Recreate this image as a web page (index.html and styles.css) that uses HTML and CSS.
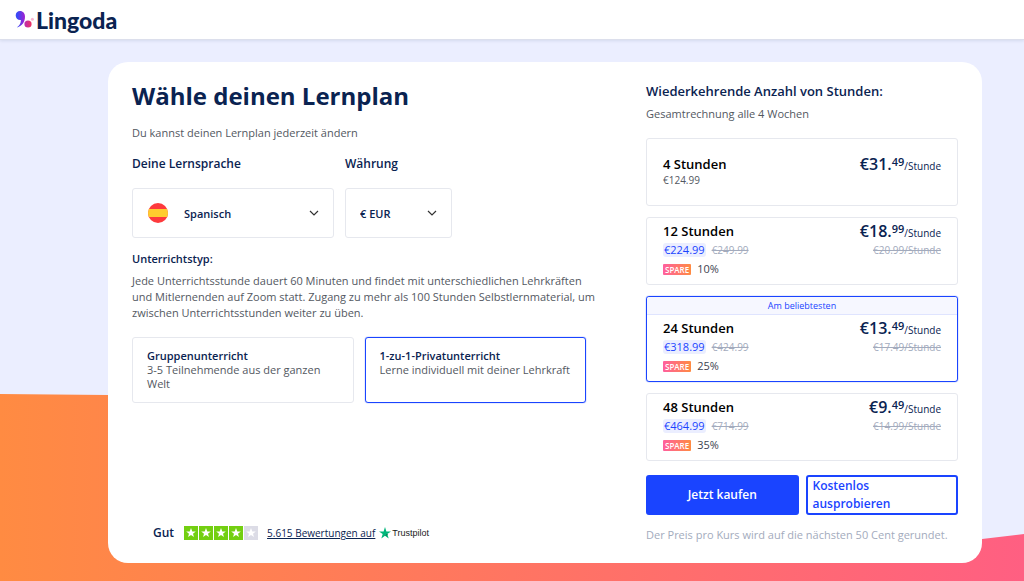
FILE: index.html
```html
<!DOCTYPE html>
<html lang="de">
<head>
    <meta charset="UTF-8">
    <meta name="viewport" content="width=device-width, initial-scale=1.0">
    <title>Lingoda - Lernplan</title>
    <link rel="stylesheet" href="styles.css">
</head>
<body>
    <header class="header">
        <a class="logo" href="#">
            <svg class="logo-mark" viewBox="0 0 19 18" aria-hidden="true">
                <defs>
                    <linearGradient id="comma" x1="0" y1="0" x2="1" y2="0">
                        <stop offset="0.2" stop-color="#3a49f5"/>
                        <stop offset="1" stop-color="#a51fd0"/>
                    </linearGradient>
                    <linearGradient id="dot" x1="0" y1="0" x2="1" y2="0">
                        <stop offset="0" stop-color="#b92bb0"/>
                        <stop offset="1" stop-color="#f03460"/>
                    </linearGradient>
                </defs>
                <path fill="url(#comma)" d="M5 0C8 0 10 2.300 10 5.700C10 11 6.800 15.300 1.700 16.500C4.500 14.500 6 12 5.900 8.900C3 9.300 0.700 7.400 0.700 4.400C0.700 1.800 2.600 0 5 0Z"/>
                <circle cx="13" cy="13" r="3.600" fill="url(#dot)"/>
                <circle cx="17.400" cy="8.300" r="1.500" fill="#f9b4cf"/>
            </svg>
            <span class="logo-text">Lingoda</span>
        </a>
    </header>

    <svg class="wave" viewBox="0 0 1024 187" preserveAspectRatio="none" aria-hidden="true">
        <defs>
            <linearGradient id="sunset" x1="0" y1="0" x2="1" y2="0">
                <stop offset="0" stop-color="#ff8b42"/>
                <stop offset="1" stop-color="#ff5f82"/>
            </linearGradient>
        </defs>
        <path fill="url(#sunset)" d="M0 0L108 1C420 20 640 190 982 145L1024 140V187H0Z"/>
    </svg>

    <main class="card">
        <section class="settings">
            <h1 class="title">Wähle deinen Lernplan</h1>
            <p class="text">Du kannst deinen Lernplan jederzeit ändern</p>

            <div class="selects">
                <div class="field">
                    <label class="label" for="language">Deine Lernsprache</label>
                    <div class="select-wrap">
                        <svg class="flag" viewBox="0 0 20 20" aria-hidden="true">
                            <clipPath id="round"><circle cx="10" cy="10" r="10"/></clipPath>
                            <g clip-path="url(#round)">
                                <path fill="#fd3a3d" d="M0 0H20V20H0Z"/>
                                <path fill="#ffcd2e" d="M0 6H20V14H0Z"/>
                            </g>
                        </svg>
                        <select class="select with-flag" id="language">
                            <option>Spanisch</option>
                        </select>
                        <svg class="chevron" viewBox="0 0 10 6" aria-hidden="true"><path d="M1 1L5 5L9 1"/></svg>
                    </div>
                </div>
                <div class="field">
                    <label class="label" for="currency">Währung</label>
                    <div class="select-wrap">
                        <select class="select" id="currency">
                            <option>€ EUR</option>
                        </select>
                        <svg class="chevron" viewBox="0 0 10 6" aria-hidden="true"><path d="M1 1L5 5L9 1"/></svg>
                    </div>
                </div>
            </div>

            <h2 class="type-title">Unterrichtstyp:</h2>
            <p class="text type-text">Jede Unterrichtsstunde dauert 60 Minuten und findet mit unterschiedlichen Lehrkräften und Mitlernenden auf Zoom statt. Zugang zu mehr als 100 Stunden Selbstlernmaterial, um zwischen Unterrichtsstunden weiter zu üben.</p>

            <div class="types">
                <label class="type">
                    <input class="radio" type="radio" name="type">
                    <strong class="type-name">Gruppenunterricht</strong>
                    <span>3-5 Teilnehmende aus der ganzen Welt</span>
                </label>
                <label class="type">
                    <input class="radio" type="radio" name="type" checked>
                    <strong class="type-name">1-zu-1-Privatunterricht</strong>
                    <span>Lerne individuell mit deiner Lehrkraft</span>
                </label>
            </div>

            <div class="rating">
                <span class="rating-word">Gut</span>
                <svg class="stars" viewBox="0 0 75 14" role="img" aria-label="4 von 5 Sternen">
                    <defs>
                        <path id="star" d="M0 -5L1.300 -1.600L4.800 -1.500L2 0.700L3 4.100L0 2.100L-3 4.100L-2 0.700L-4.800 -1.500L-1.300 -1.600Z"/>
                    </defs>
                    <path fill="#73cf11" d="M0 0H14V14H0ZM15 0H29V14H15ZM30 0H44V14H30ZM45 0H59V14H45Z"/>
                    <path fill="#dcdce6" d="M60 0H74V14H60Z"/>
                    <g fill="#fff">
                        <use href="#star" x="7" y="7"/>
                        <use href="#star" x="22" y="7"/>
                        <use href="#star" x="37" y="7"/>
                        <use href="#star" x="52" y="7"/>
                        <use href="#star" x="67" y="7"/>
                    </g>
                </svg>
                <a class="reviews" href="#">5.615 Bewertungen auf</a>
                <span class="trustpilot">
                    <svg class="trust-star" viewBox="0 0 12 12" aria-hidden="true">
                        <path fill="#00b67a" d="M6 0L7.400 4.400H12L8.300 7.100L9.700 11.500L6 8.800L2.300 11.500L3.700 7.100L0 4.400H4.600Z"/>
                        <path fill="#005128" d="M8.700 8.100L8.300 7.100L6 8.800Z"/>
                    </svg>
                    Trustpilot
                </span>
            </div>
        </section>

        <section class="offer">
            <h2 class="offer-title">Wiederkehrende Anzahl von Stunden:</h2>
            <p class="text">Gesamtrechnung alle 4 Wochen</p>

            <div class="plans">
                <label class="plan">
                    <input class="radio" type="radio" name="plan">
                    <span class="plan-body plan-small">
                        <span class="plan-info">
                            <span class="plan-name">4 Stunden</span>
                            <span class="plan-total">€124.99</span>
                        </span>
                        <span class="plan-price">
                            <span class="price"><b>€31.<sup>49</sup></b>/Stunde</span>
                        </span>
                    </span>
                </label>

                <label class="plan">
                    <input class="radio" type="radio" name="plan">
                    <span class="plan-body">
                        <span class="plan-info">
                            <span class="plan-name">12 Stunden</span>
                            <span class="plan-sale"><mark class="new">€224.99</mark><del class="old">€249.99</del></span>
                            <span class="plan-save"><span class="badge">SPARE</span>10%</span>
                        </span>
                        <span class="plan-price">
                            <span class="price"><b>€18.<sup>99</sup></b>/Stunde</span>
                            <del class="old">€20.99/Stunde</del>
                        </span>
                    </span>
                </label>

                <label class="plan">
                    <input class="radio" type="radio" name="plan" checked>
                    <span class="popular">Am beliebtesten</span>
                    <span class="plan-body">
                        <span class="plan-info">
                            <span class="plan-name">24 Stunden</span>
                            <span class="plan-sale"><mark class="new">€318.99</mark><del class="old">€424.99</del></span>
                            <span class="plan-save"><span class="badge">SPARE</span>25%</span>
                        </span>
                        <span class="plan-price">
                            <span class="price"><b>€13.<sup>49</sup></b>/Stunde</span>
                            <del class="old">€17.49/Stunde</del>
                        </span>
                    </span>
                </label>

                <label class="plan">
                    <input class="radio" type="radio" name="plan">
                    <span class="plan-body">
                        <span class="plan-info">
                            <span class="plan-name">48 Stunden</span>
                            <span class="plan-sale"><mark class="new">€464.99</mark><del class="old">€714.99</del></span>
                            <span class="plan-save"><span class="badge">SPARE</span>35%</span>
                        </span>
                        <span class="plan-price">
                            <span class="price"><b>€9.<sup>49</sup></b>/Stunde</span>
                            <del class="old">€14.99/Stunde</del>
                        </span>
                    </span>
                </label>
            </div>

            <div class="actions">
                <button class="btn btn-primary" type="button">Jetzt kaufen</button>
                <button class="btn btn-outline" type="button">Kostenlos ausprobieren</button>
            </div>
            <p class="note">Der Preis pro Kurs wird auf die nächsten 50 Cent gerundet.</p>
        </section>
    </main>
</body>
</html>
```

FILE: styles.css
```css
* {
    box-sizing: border-box;
}

body {
    margin: 0;
    min-height: 100vh;
    position: relative;
    background: #ebeeff;
    color: #0a2351;
    font-family: 'Open Sans', 'Noto Sans', sans-serif;
    font-size: 11px;
    line-height: 16px;
}

h1, h2, p {
    margin: 0;
}

.header {
    height: 40px;
    padding: 0 15px;
    display: flex;
    align-items: center;
    background: #fff;
    border-bottom: 1px solid #dcdfec;
    box-shadow: 0 1px 3px rgba(10, 35, 81, 0.1);
}

.logo {
    display: flex;
    align-items: center;
    gap: 2px;
    color: #0a2351;
    text-decoration: none;
}

.logo-mark {
    width: 19px;
    height: 18px;
}

.logo-text {
    font-family: Lato, sans-serif;
    font-size: 23px;
    font-weight: 900;
    line-height: 24px;
}

.wave {
    position: absolute;
    left: 0;
    bottom: 0;
    width: 100%;
    height: 187px;
}

.card {
    position: relative;
    margin: 22px 42px 18px 108px;
    padding: 18px 24px 20px;
    display: grid;
    grid-template-columns: 454fr 312fr;
    gap: 60px;
    background: #fff;
    border-radius: 20px;
}

.settings {
    display: flex;
    flex-direction: column;
}

.title {
    margin-bottom: 13px;
    font-size: 24px;
    line-height: 32px;
    font-weight: 700;
}

.text {
    color: #53585f;
}

.selects {
    display: grid;
    grid-template-columns: 202fr 107fr 123fr;
    gap: 11px;
    margin-top: 15px;
}

.label {
    display: block;
    margin-bottom: 16px;
    font-size: 12px;
    font-weight: 600;
}

.select-wrap {
    position: relative;
}

.select {
    appearance: none;
    display: block;
    width: 100%;
    height: 50px;
    padding: 0 32px 0 14px;
    border: 1px solid #e6e8ee;
    border-radius: 3px;
    background: #fff;
    color: #0a2351;
    font: 600 11px 'Open Sans', sans-serif;
}

.with-flag {
    padding-left: 51px;
}

.flag {
    position: absolute;
    left: 16px;
    top: 15px;
    width: 20px;
    height: 20px;
}

.chevron {
    position: absolute;
    right: 15px;
    top: 22px;
    width: 10px;
    height: 6px;
    fill: none;
    stroke: #333;
    stroke-width: 1.2;
    pointer-events: none;
}

.type-title {
    margin-top: 13px;
    font-size: 11px;
    font-weight: 600;
}

.type-text {
    margin: 6px -16px 0 0;
}

.types {
    display: grid;
    grid-template-columns: 1fr 1fr;
    gap: 11px;
    margin-top: 16px;
}

.radio {
    position: absolute;
    opacity: 0;
    margin: 0;
}

.type,
.plan {
    border: 1px solid #e6e8ee;
    border-radius: 3px;
    cursor: pointer;
}

.type:has(:checked),
.plan:has(:checked) {
    border-color: #1a44ff;
    box-shadow: 0 0 1px #1a44ff;
}

.type {
    min-height: 65px;
    padding: 11px 14px;
    color: #53585f;
    line-height: 14px;
}

.type-name {
    display: block;
    color: #0a2351;
    font-weight: 600;
}

.rating {
    display: flex;
    align-items: center;
    gap: 8px;
    margin-top: auto;
    padding: 0 21px 2px;
}

.rating-word {
    margin-right: 2px;
    font-size: 12px;
    font-weight: 600;
}

.stars {
    width: 75px;
    height: 14px;
}

.reviews {
    color: #0a2351;
    font-size: 10px;
}

.trustpilot {
    display: flex;
    align-items: center;
    gap: 1px;
    margin-left: -4px;
    color: #191919;
    font-family: 'Liberation Sans', sans-serif;
    font-size: 9px;
}

.trust-star {
    width: 12px;
    height: 12px;
}

.offer-title {
    margin: 1px 0 5px;
    font-size: 13px;
    line-height: 20px;
    font-weight: 600;
}

.plans {
    display: grid;
    gap: 11px;
    margin-top: 16px;
}

.popular {
    display: block;
    border-bottom: 1px solid #dfe4ff;
    border-radius: 3px 3px 0 0;
    background: #f6f7ff;
    color: #1a44ff;
    font-size: 9px;
    line-height: 17px;
    text-align: center;
}

.plan-body {
    display: flex;
    justify-content: space-between;
    min-height: 66px;
    padding: 4px 16px;
}

.plan-small {
    padding-top: 16px;
}

.plan-info,
.plan-price {
    display: flex;
    flex-direction: column;
}

.plan-price {
    align-items: flex-end;
}

.plan-name {
    color: #000;
    font-size: 13px;
    line-height: 18px;
    font-weight: 600;
}

.plan-total {
    color: #53585f;
    font-size: 10px;
    line-height: 14px;
}

.plan-sale,
.plan-save {
    display: flex;
    align-items: center;
    gap: 6px;
    margin-top: 2px;
}

.plan-save {
    margin-top: 3px;
    color: #3c4250;
}

.new {
    padding: 0 1px;
    border-radius: 3px;
    background: #ebeeff;
    color: #1a44ff;
    line-height: 14px;
}

.old {
    color: #a3abbd;
    font-size: 10px;
}

.badge {
    padding: 0 2px;
    border-radius: 1px;
    background: linear-gradient(90deg, #ff5f9e, #ff8b42);
    color: #fff;
    font-size: 8px;
    font-weight: 600;
    line-height: 11px;
}

.price {
    font-size: 10px;
    line-height: 18px;
}

.price b {
    font-size: 16px;
    font-weight: 600;
}

.price sup {
    font-size: 11px;
    line-height: 0;
    vertical-align: 4px;
}

.actions {
    display: grid;
    grid-template-columns: 1fr 1fr;
    gap: 7px;
    margin-top: 14px;
}

.btn {
    min-height: 40px;
    padding: 0 5px;
    border: 2px solid #1a44ff;
    border-radius: 3px;
    font: 600 12px/18px 'Open Sans', sans-serif;
    cursor: pointer;
}

.btn-primary {
    background: #1a44ff;
    color: #fff;
}

.btn-outline {
    padding-right: 24px;
    background: #fff;
    color: #1a44ff;
    text-align: left;
}

.note {
    margin-top: 12px;
    color: #a3abbd;
}
```
